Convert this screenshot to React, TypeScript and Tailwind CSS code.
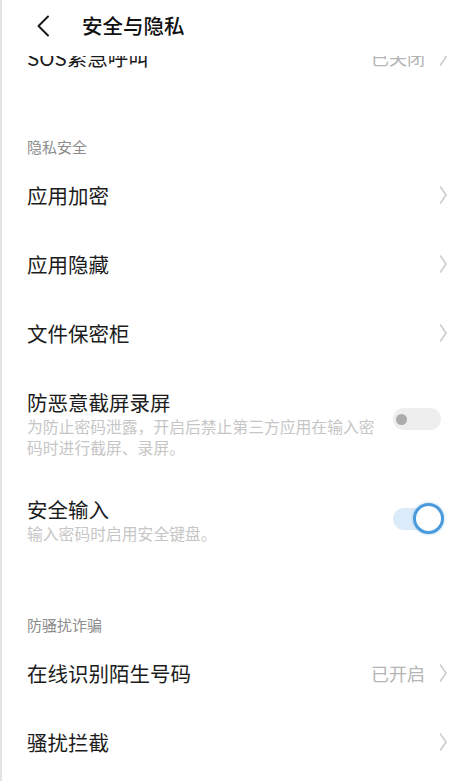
import React from "react";

const font = { fontFamily: '"Noto Sans CJK SC", "Noto Sans", sans-serif' };

function Chevron() {
  return (
    <svg width="9" height="20" viewBox="0 0 9 20" className="shrink-0">
      <path d="M1.5 2 Q5 7 7 10 Q5 13 1.5 18" fill="none" stroke="#cdcdcd" strokeWidth="1.6" strokeLinecap="round" strokeLinejoin="round" />
    </svg>
  );
}

function NavRow({ label, value }: { label: string; value?: string }) {
  return (
    <div className="h-[69px] flex items-center justify-between pl-[25px] pr-[27px]">
      <span className="text-[20.5px] leading-[28px] text-[#1c1c1c]">{label}</span>
      <div className="flex items-center gap-[14px]">
        {value && <span className="text-[18px] leading-[24px] text-[#b5b5b5]">{value}</span>}
        <Chevron />
      </div>
    </div>
  );
}

function Section({ label, pt }: { label: string; pt: string }) {
  return (
    <div className={`pl-[25px] ${pt}`}>
      <span className="text-[15px] leading-[22px] text-[#8c8c8c]">{label}</span>
    </div>
  );
}

export default function App() {
  return (
    <div className="w-full h-[781px] bg-white border-l-2 border-[#e3e3e3] overflow-hidden" style={font}>
      {/* header */}
      <div className="h-[56px] flex items-center pb-[6px]">
        <svg width="14" height="22" viewBox="0 0 14 22" className="ml-[34px] mt-[2px]">
          <path d="M12 1.5 L2.5 11 L12 20.5" fill="none" stroke="#1a1a1a" strokeWidth="2" strokeLinecap="round" strokeLinejoin="round" />
        </svg>
        <span className="ml-[32px] text-[20.5px] leading-[28px] font-medium text-[#111]">安全与隐私</span>
      </div>
      {/* clipped row */}
      <div className="h-[14px] overflow-hidden pl-[25px] pr-[27px]">
        <div className="-mt-[13px] flex items-center justify-between">
          <span className="text-[20.5px] leading-[28px] text-[#1c1c1c]">SOS紧急呼叫</span>
          <div className="flex items-center gap-[14px]">
            <span className="text-[18px] leading-[24px] text-[#b5b5b5]">已关闭</span>
            <Chevron />
          </div>
        </div>
      </div>

      <Section label="隐私安全" pt="pt-[64px] pb-[2px]" />
      <NavRow label="应用加密" />
      <NavRow label="应用隐藏" />
      <NavRow label="文件保密柜" />

      {/* 防恶意截屏录屏 */}
      <div className="pt-[21px] pl-[25px] pr-[34px] flex items-start justify-between">
        <div className="w-[352px]">
          <div className="text-[20.5px] leading-[28px] text-[#1c1c1c]">防恶意截屏录屏</div>
          <div className="text-[15.8px] leading-[21px] text-[#c6c6c6]">
            为防止密码泄露，开启后禁止第三方应用在输入密码时进行截屏、录屏。
          </div>
        </div>
        <div className="mt-[20px] w-[48px] h-[22px] rounded-full bg-[#eeeeee] flex items-center pl-[3px]">
          <div className="w-[11px] h-[11px] rounded-full bg-[#acacac]" />
        </div>
      </div>

      {/* 安全输入 */}
      <div className="pt-[37px] pl-[25px] pr-[31px] flex items-start justify-between">
        <div>
          <div className="text-[20.5px] leading-[28px] text-[#1c1c1c]">安全输入</div>
          <div className="text-[15.8px] leading-[21px] text-[#c6c6c6]">输入密码时启用安全键盘。</div>
        </div>
        <div className="mt-[8px] relative w-[51px] h-[31px] flex items-center">
          <div className="w-[40px] h-[22px] rounded-full bg-[#dcebf9]" />
          <div className="absolute right-0 top-0 w-[31px] h-[31px] rounded-full bg-white border-[3px] border-[#4b9bdc] shadow-[0_0_3px_rgba(75,155,220,0.5)]" />
        </div>
      </div>

      <Section label="防骚扰诈骗" pt="pt-[68px] pb-[2px]" />
      <NavRow label="在线识别陌生号码" value="已开启" />
      <NavRow label="骚扰拦截" />
    </div>
  );
}
